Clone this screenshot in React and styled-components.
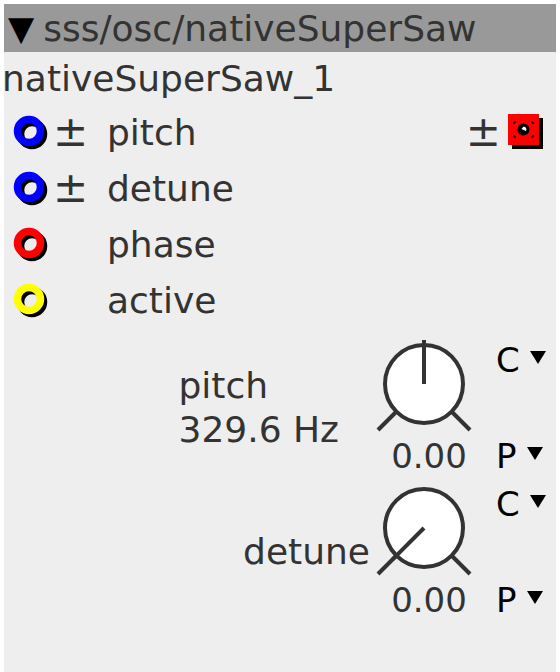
import React from "react";
import styled, { createGlobalStyle } from "styled-components";

const Global = createGlobalStyle`
	html, body {
		margin: 0;
		background: #ffffff;
		overflow: hidden;
	}
`;

const Panel = styled.div`
	margin: 4px;
	min-height: 668px;
	background: #eeeeee;
	font-family: "DejaVu Sans", sans-serif;
	font-size: 36px;
	color: #333333;
`;

const Header = styled.div`
	height: 48px;
	display: flex;
	align-items: center;
	padding-left: 4px;
	background: #999999;
	white-space: nowrap;
`;

const Arrow = styled.span`
	color: #000000;
	font-size: 34px;
	margin-right: 9px;
`;

const Name = styled.div`
	height: 52px;
	display: flex;
	align-items: center;
	margin-left: -2px;
`;

const PortRow = styled.div`
	height: 56px;
	display: grid;
	grid-template-columns: 50px 53px 1fr auto;
	align-items: center;
`;

const PortIcon = styled.svg`
	margin-left: 9px;
	display: block;
`;

const PlusMinus = styled.span`
	color: #333333;
	font-size: 42px;
	line-height: 1;
	margin-left: -1px;
`;

const Outputs = styled.div`
	display: flex;
	align-items: center;
	gap: 7px;
	padding-right: 12px;
`;

const KnobRow = styled.div`
	height: 144px;
	display: flex;
	align-items: center;
	justify-content: flex-end;
	padding-right: 8px;
	margin-top: ${(p) => p.$top || 0}px;
`;

const KnobLabel = styled.div`
	display: flex;
	flex-direction: column;
	margin-right: ${(p) => p.$gap}px;
	line-height: 44px;
`;

const KnobCol = styled.div`
	width: 100px;
	display: flex;
	flex-direction: column;
	align-items: center;
`;

const Value = styled.div`
	height: 48px;
	line-height: 48px;
	padding-left: 10px;
	font-size: 34px;
`;

const Modes = styled.div`
	width: 52px;
	height: 144px;
	margin-left: 22px;
	display: flex;
	flex-direction: column;
	justify-content: space-between;
`;

const Mode = styled.div`
	height: 48px;
	display: flex;
	align-items: center;
	gap: 10px;
	color: #000000;
	font-size: 34px;
`;

const Caret = styled.span`
	width: 0;
	height: 0;
	border-left: 8.5px solid transparent;
	border-right: 8.5px solid transparent;
	border-top: 13px solid #000000;
	margin-bottom: 5px;
`;

function InPort({ color }) {
	return (
		<PortIcon width="40" height="40" viewBox="0 0 40 40">
			<circle cx="19" cy="22" r="11.5" fill="none" stroke="#000" strokeWidth="7.5" />
			<circle cx="16" cy="19" r="11.5" fill="none" stroke={color} strokeWidth="7.5" />
		</PortIcon>
	);
}

function OutPort() {
	return (
		<svg width="36" height="36" viewBox="0 0 36 36" style={{ display: "block" }}>
			<rect x="4" y="4" width="31" height="31" fill="#000" />
			<rect x="0" y="0" width="31" height="31" fill="#ff0000" />
			<circle cx="15.5" cy="15.5" r="6" fill="#000" />
			<path d="M15.5 12.5 A3 3 0 0 1 18 17 L13.5 15 Z" fill="#fff" />
			<g stroke="#000" strokeWidth="1.5">
				<path d="M6 8 h2 M6 8 v2" />
				<path d="M25 8 h-2 M25 8 v2" />
				<path d="M6 23 h2 M6 23 v-2" />
				<path d="M25 23 h-2 M25 23 v-2" />
			</g>
		</svg>
	);
}

function Knob({ angle }) {
	const rad = ((angle - 90) * Math.PI) / 180;
	const x = 50 + 44 * Math.cos(rad);
	const y = 48 + 44 * Math.sin(rad);
	return (
		<svg width="100" height="96" viewBox="0 0 100 96" style={{ display: "block" }}>
			<g stroke="#333" strokeWidth="4">
				<line x1="50" y1="48" x2="4" y2="94" />
				<line x1="50" y1="48" x2="96" y2="94" />
				<circle cx="50" cy="48" r="39" fill="#fff" />
				<line x1="50" y1="48" x2={x} y2={y} />
			</g>
		</svg>
	);
}

const ports = [
	{ name: "pitch", color: "#0000ff", pm: true, out: true },
	{ name: "detune", color: "#0000ff", pm: true },
	{ name: "phase", color: "#ff0000" },
	{ name: "active", color: "#ffff00" },
];

const knobs = [
	{ label: ["pitch", "329.6 Hz"], angle: 0, gap: 35, top: 8 },
	{ label: ["detune"], angle: -135, gap: 4 },
];

export default function App() {
	return (
		<Panel>
			<Global />
			<Header>
				<Arrow>▼</Arrow>sss/osc/nativeSuperSaw
			</Header>
			<Name>nativeSuperSaw_1</Name>
			{ports.map((p) => (
				<PortRow key={p.name}>
					<InPort color={p.color} />
					<PlusMinus>{p.pm ? "±" : ""}</PlusMinus>
					<span>{p.name}</span>
					{p.out ? (
						<Outputs>
							<PlusMinus>±</PlusMinus>
							<OutPort />
						</Outputs>
					) : (
						<span />
					)}
				</PortRow>
			))}
			{knobs.map((k) => (
				<KnobRow key={k.label[0]} $top={k.top}>
					<KnobLabel $gap={k.gap}>
						{k.label.map((l) => (
							<span key={l}>{l}</span>
						))}
					</KnobLabel>
					<KnobCol>
						<Knob angle={k.angle} />
						<Value>0.00</Value>
					</KnobCol>
					<Modes>
						<Mode>
							C<Caret />
						</Mode>
						<Mode>
							P<Caret />
						</Mode>
					</Modes>
				</KnobRow>
			))}
		</Panel>
	);
}
